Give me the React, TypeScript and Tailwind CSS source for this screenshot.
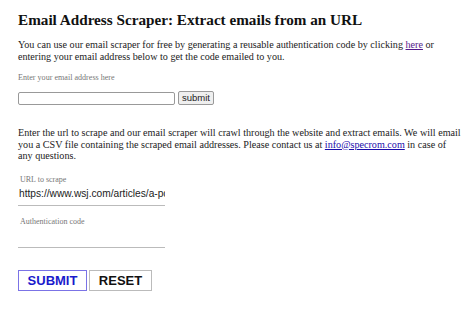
export default function App() {
  return (
    <div className="w-[474px] h-[320px] bg-white overflow-hidden pl-[18px] pt-[10px]" style={{ fontFamily: '"Liberation Serif", serif' }}>
      <h1 className="text-[15.2px] font-bold leading-[20px] text-[#111]">Email Address Scraper: Extract emails from an URL</h1>
      <p className="mt-[9px] text-[10.15px] leading-[12px] text-[#222] w-[450px]">
        You can use our email scraper for free by generating a reusable authentication code by clicking{' '}
        <a className="underline text-[#551a8b]">here</a> or entering your email address below to get the code emailed to you.
      </p>
      <div className="mt-[10px] text-[8.1px] text-[#777] leading-[10px]">Enter your email address here</div>
      <div className="mt-[8px] flex items-center gap-[3px]">
        <input className="w-[157px] h-[13px] border border-[#999] rounded-[2px] bg-white" />
        <button className="h-[14px] px-[3px] border border-[#999] rounded-[2px] bg-[#efefef] text-[9.5px] leading-[12px] text-[#222]" style={{ fontFamily: '"Liberation Sans", sans-serif' }}>submit</button>
      </div>
      <p className="mt-[22px] text-[10.15px] leading-[11.5px] text-[#222] w-[452px]">
        Enter the url to scrape and our email scraper will crawl through the website and extract emails. We will email you a CSV file containing the scraped email addresses. Please contact us at{' '}
        <a className="underline text-[#1a0dab]">info@specrom.com</a> in case of
        <br />
        any questions.
      </p>
      <div className="mt-[13px] ml-[2px] text-[8px] text-[#777] leading-[10px]">URL to scrape</div>
      <div className="w-[147px] border-b border-[#bbb] overflow-hidden whitespace-nowrap mt-[2px] pb-[4px] pl-[1px] text-[10.2px] leading-[14px] text-[#222]" style={{ fontFamily: '"Liberation Sans", sans-serif' }}>https://www.wsj.com/articles/a-pc</div>
      <div className="mt-[11px] ml-[2px] text-[8px] text-[#777] leading-[10px]">Authentication code</div>
      <div className="w-[147px] border-b border-[#bbb] h-[21px]"></div>
      <div className="mt-[22px] flex gap-[2px]" style={{ fontFamily: '"Liberation Sans", sans-serif' }}>
        <button className="w-[69px] h-[21px] border border-[#7b73e6] text-[#1a1acc] font-bold text-[13px] leading-[19px]">SUBMIT</button>
        <button className="w-[63px] h-[21px] border border-[#bbb] text-[#111] font-bold text-[13px] leading-[19px]">RESET</button>
      </div>
    </div>
  );
}
